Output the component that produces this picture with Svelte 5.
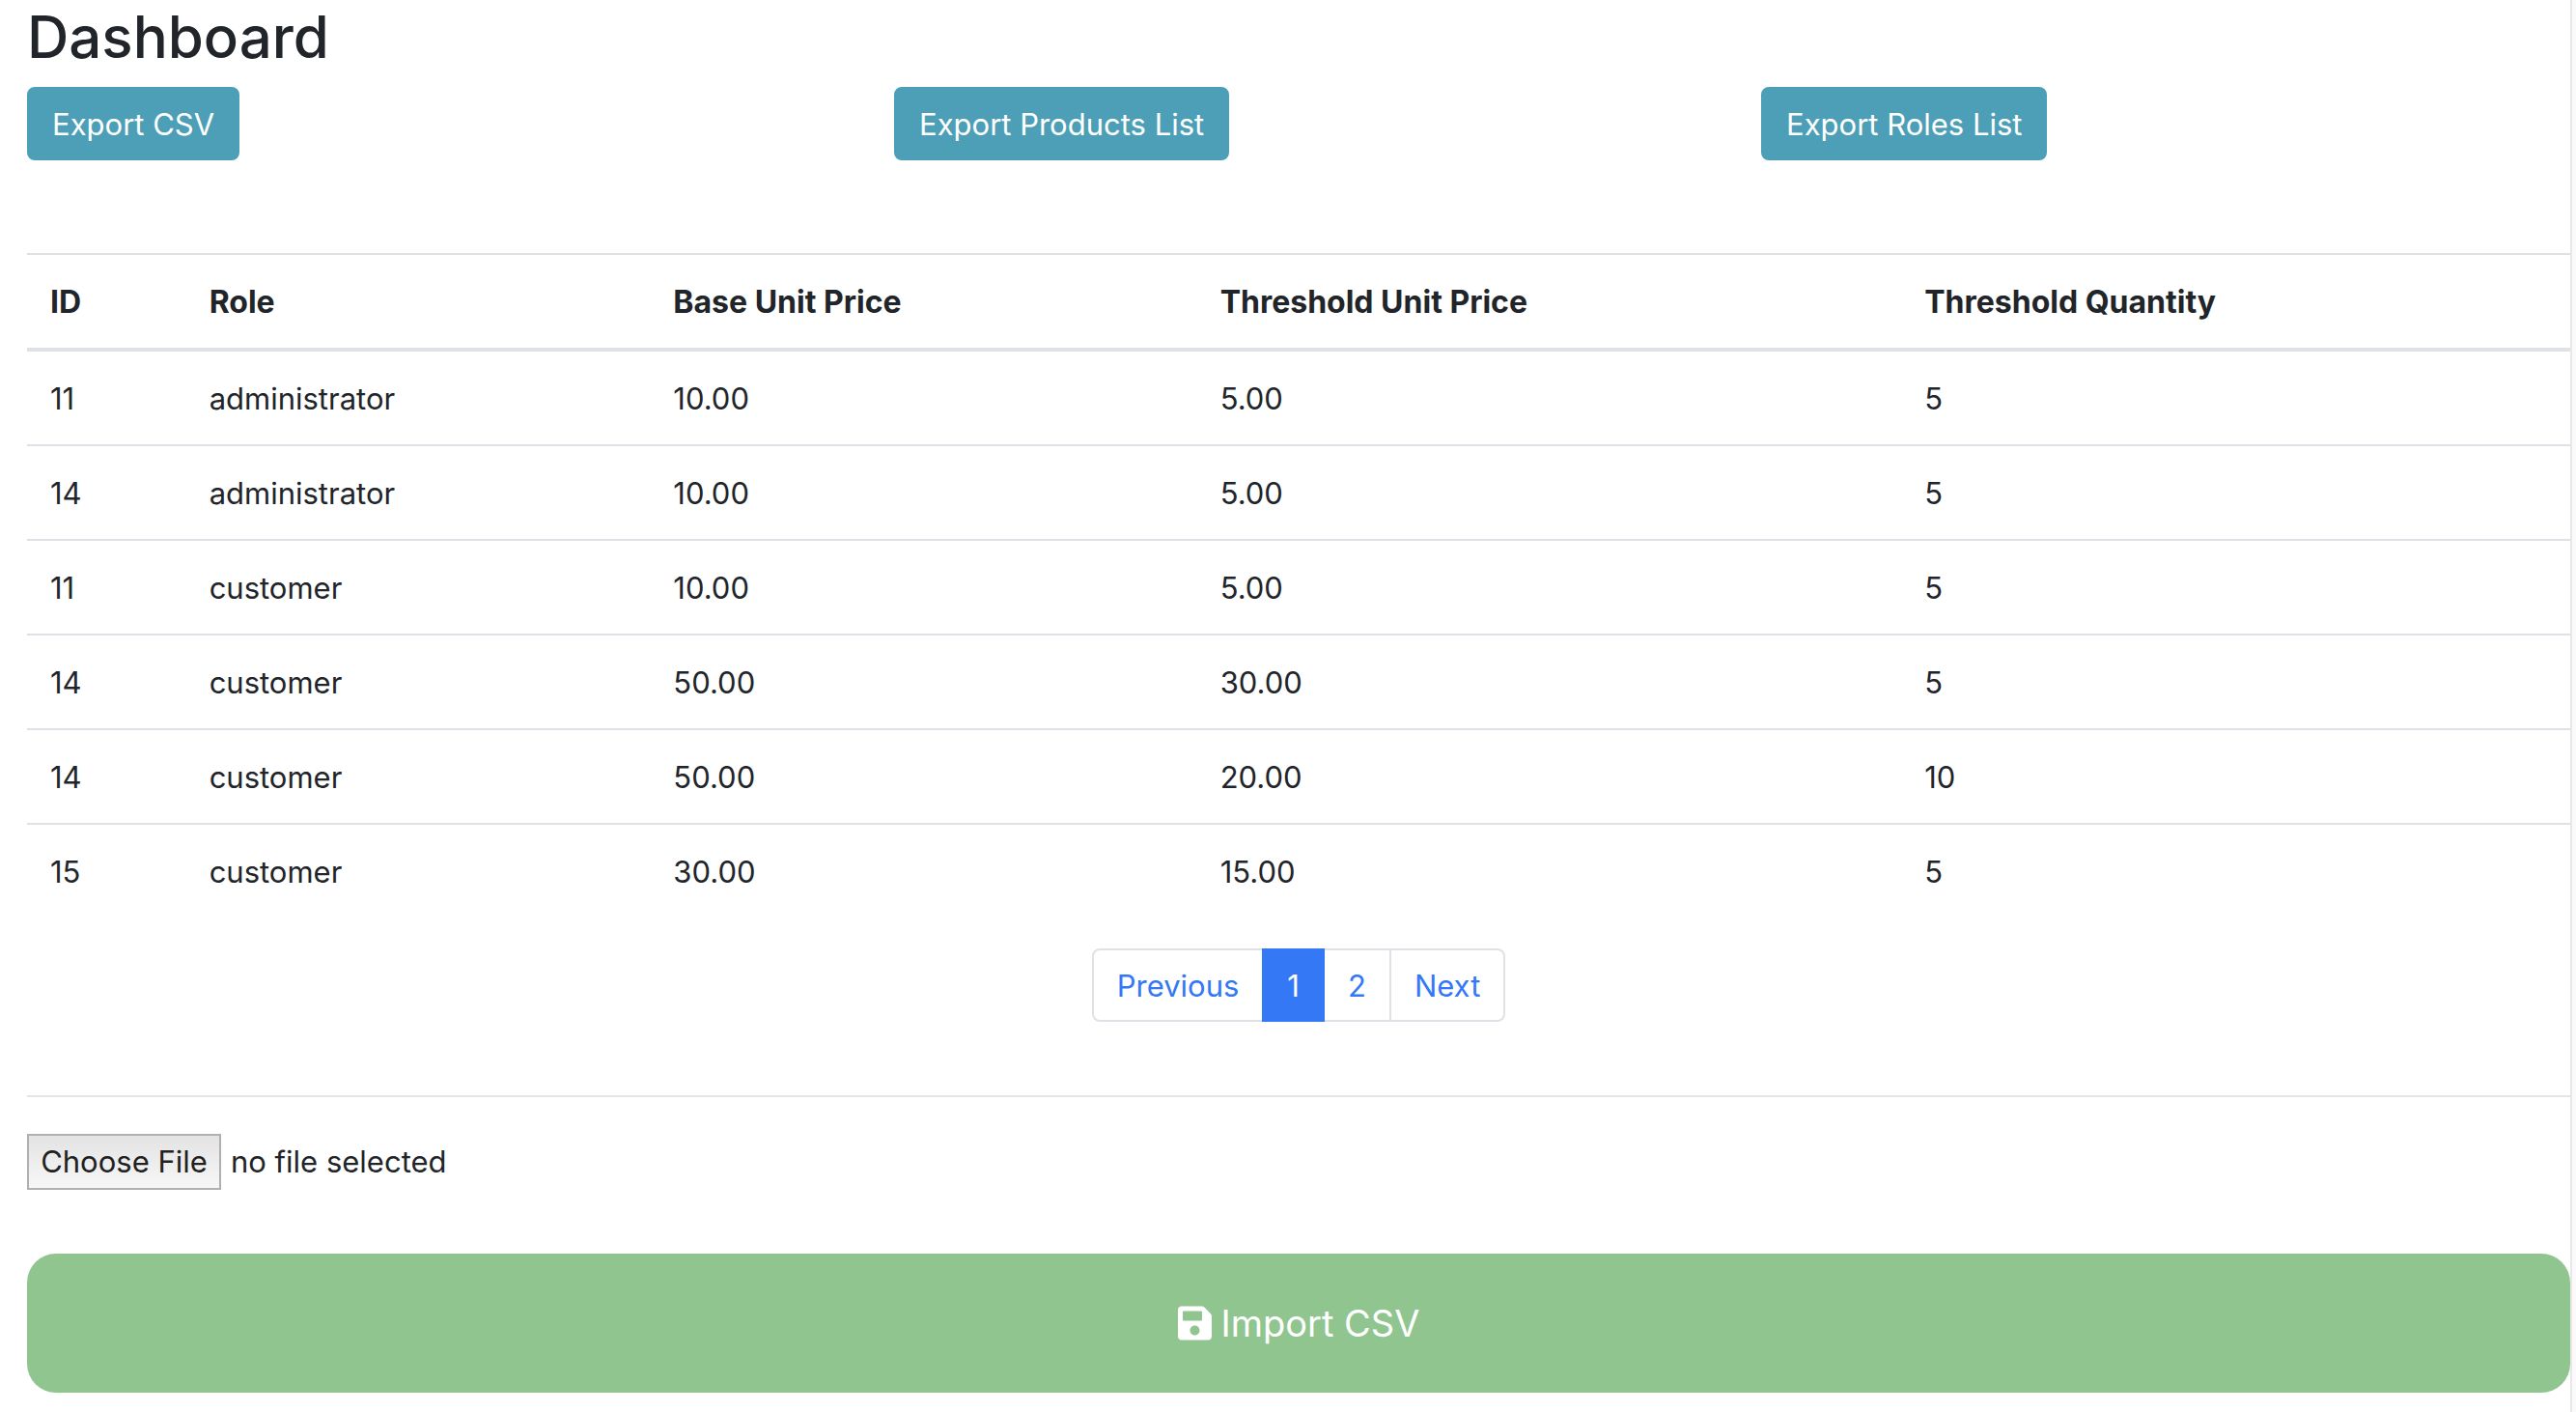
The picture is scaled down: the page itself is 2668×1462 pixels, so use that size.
<script>
  const exports = ['Export CSV', 'Export Products List', 'Export Roles List'];
  const columns = ['ID', 'Role', 'Base Unit Price', 'Threshold Unit Price', 'Threshold Quantity'];
  const rows = [
    ['11', 'administrator', '10.00', '5.00', '5'],
    ['14', 'administrator', '10.00', '5.00', '5'],
    ['11', 'customer', '10.00', '5.00', '5'],
    ['14', 'customer', '50.00', '30.00', '5'],
    ['14', 'customer', '50.00', '20.00', '10'],
    ['15', 'customer', '30.00', '15.00', '5']
  ];
  const pages = ['Previous', '1', '2', 'Next'];
  let current = $state('1');
  let files = $state(null);
  let fileName = $derived(files && files.length ? files[0].name : 'no file selected');

  function go(event, page) {
    event.preventDefault();
    if (page === 'Previous') current = '1';
    else if (page === 'Next') current = '2';
    else current = page;
  }
</script>

<main class="dashboard">
  <h2 class="title">Dashboard</h2>

  <div class="exports">
    {#each exports as label}
      <div><button type="button" class="export">{label}</button></div>
    {/each}
  </div>

  <table class="prices">
    <colgroup>
      <col class="col-id" />
      <col class="col-role" />
      <col class="col-base" />
      <col class="col-threshold" />
      <col />
    </colgroup>
    <thead>
      <tr>
        {#each columns as column}
          <th scope="col">{column}</th>
        {/each}
      </tr>
    </thead>
    <tbody>
      {#each rows as row}
        <tr>
          {#each row as cell}
            <td>{cell}</td>
          {/each}
        </tr>
      {/each}
    </tbody>
  </table>

  <nav aria-label="Price pages">
    <ul class="pagination">
      {#each pages as page}
        <li>
          <a href="#{page}" class="page" class:active={page === current} onclick={(e) => go(e, page)}>{page}</a>
        </li>
      {/each}
    </ul>
  </nav>

  <hr class="rule" />

  <form class="import-form" onsubmit={(e) => e.preventDefault()}>
    <div class="picker">
      <input id="csv" class="file" type="file" accept=".csv" bind:files />
      <label for="csv">{fileName}</label>
    </div>
    <button type="submit" class="import">
      <svg class="save" viewBox="0 0 448 512" aria-hidden="true">
        <path fill="currentColor" d="M433.941 129.941l-83.882-83.882A48 48 0 0 0 316.118 32H48C21.49 32 0 53.49 0 80v352c0 26.51 21.49 48 48 48h352c26.51 0 48-21.49 48-48V163.882a48 48 0 0 0-14.059-33.941zM224 416c-35.346 0-64-28.654-64-64 0-35.346 28.654-64 64-64s64 28.654 64 64c0 35.346-28.654 64-64 64zm96-304.52V212c0 6.627-5.373 12-12 12H76c-6.627 0-12-5.373-12-12V108c0-6.627 5.373-12 12-12h228.52c3.183 0 6.235 1.243 8.485 3.493l3.48 3.48A11.996 11.996 0 0 1 320 111.48z" />
      </svg>
      Import CSV
    </button>
  </form>
</main>

<style>
  :global(body) {
    margin: 0;
    padding-right: 4px;
    background: #fafafa;
  }

  .dashboard {
    box-sizing: border-box;
    min-height: 100vh;
    padding: 0 0 20px 28px;
    border-right: 2px solid #e8e8e8;
    background: #fff;
    color: #212529;
    font-family: Inter, 'Liberation Sans', sans-serif;
    font-size: 31px;
    line-height: 48px;
  }

  .title {
    margin: 0 0 14px;
    font-size: 60px;
    font-weight: 500;
    line-height: 76px;
  }

  .exports {
    display: grid;
    grid-template-columns: repeat(3, 1fr);
    gap: 60px;
    margin-bottom: 96px;
  }

  button {
    font: inherit;
    color: #fff;
    cursor: pointer;
  }

  .export {
    display: block;
    padding: 13px 24px 11px;
    border: 2px solid #4c9fb6;
    border-radius: 8px;
    background: #4c9fb6;
  }

  .prices {
    width: 100%;
    table-layout: fixed;
    border-collapse: separate;
    border-spacing: 0;
    margin-bottom: 32px;
  }

  .col-id {
    width: 6.25%;
  }

  .col-role {
    width: 18.25%;
  }

  .col-base {
    width: 21.5%;
  }

  .col-threshold {
    width: 27.7%;
  }

  th,
  td {
    padding: 25px 24px 23px;
    border-top: 2px solid #dee2e6;
    text-align: left;
  }

  th {
    border-bottom: 4px solid #dee2e6;
    font-size: 32px;
    font-weight: 700;
  }

  tbody tr:first-child td {
    border-top: 0;
  }

  .pagination {
    display: flex;
    justify-content: center;
    margin: 0;
    padding: 0;
    list-style: none;
  }

  .pagination li + li {
    margin-left: -2px;
  }

  .page {
    position: relative;
    display: block;
    padding: 13px 24px 11px;
    border: 2px solid #dee2e6;
    background: #fff;
    color: #3478f6;
    text-decoration: none;
  }

  .pagination li:first-child .page {
    border-radius: 8px 0 0 8px;
  }

  .pagination li:last-child .page {
    border-radius: 0 8px 8px 0;
  }

  .page.active {
    z-index: 1;
    border-color: #3478f6;
    background: #3478f6;
    color: #fff;
  }

  .rule {
    margin: 76px 0 38px;
    border: 0;
    border-top: 2px solid #e5e5e5;
  }

  .picker {
    display: flex;
    align-items: center;
    gap: 10px;
    margin-bottom: 66px;
  }

  .file {
    width: 201px;
    height: 58px;
    overflow: hidden;
    font: inherit;
  }

  .file::file-selector-button {
    box-sizing: border-box;
    width: 100%;
    height: 58px;
    margin: 0;
    padding: 0;
    border: 2px solid #b0b0b0;
    background: linear-gradient(#e3e3e3, #f7f7f7);
    color: #212121;
    font: inherit;
  }

  .import {
    display: flex;
    align-items: center;
    justify-content: center;
    gap: 10px;
    width: 100%;
    padding: 42px 24px;
    border: 0;
    border-radius: 30px;
    background: #90c590;
    font-size: 38px;
    line-height: 60px;
  }

  .save {
    width: 35px;
    height: 40px;
  }
</style>
